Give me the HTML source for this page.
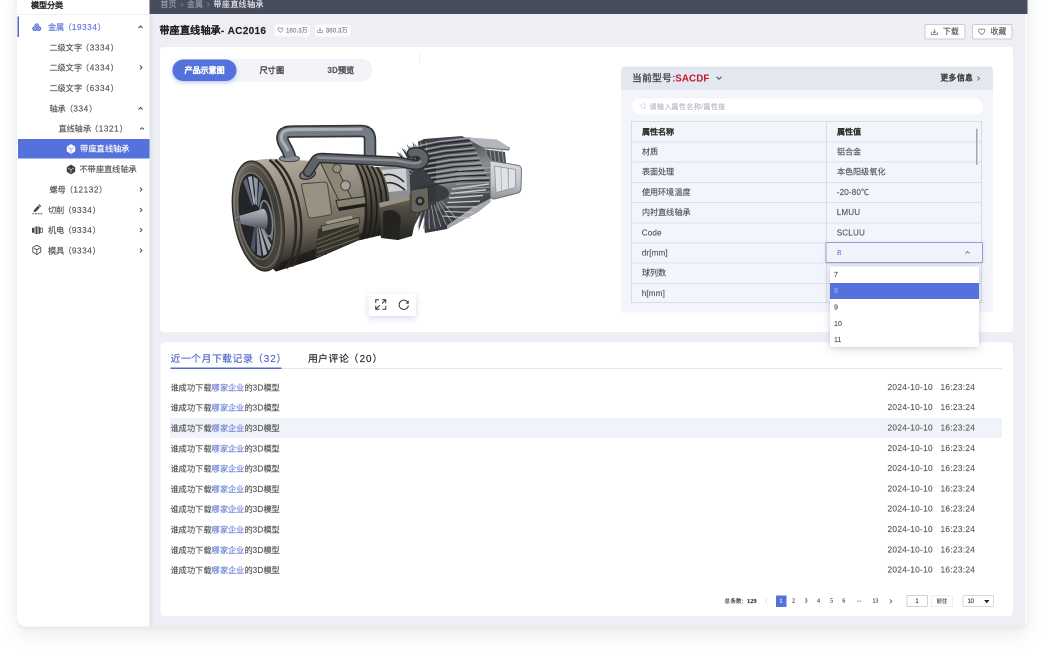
<!DOCTYPE html>
<html lang="zh-CN">
<head>
<meta charset="utf-8">
<title>带座直线轴承 - AC2016</title>
<style>
html,body{margin:0;padding:0;width:1045px;height:653px;overflow:hidden;background:#fff;}
body{font-family:"Liberation Sans",sans-serif;}
/* everything below is authored at 2x and scaled down by 0.5 */
#stage{-webkit-text-stroke:0.28px;will-change:transform;position:absolute;left:0;top:0;width:2090px;height:1306px;transform:scale(0.5);transform-origin:0 0;overflow:hidden;background:#fff;font-size:16.2px;color:#555;}
#stage *{box-sizing:border-box;}
.abs{position:absolute;}
.t{position:absolute;white-space:nowrap;height:40px;line-height:40px;}
#card{position:absolute;left:34px;top:-40px;width:2021px;height:1293px;border-radius:0 0 18px 18px;background:#eeeff5;box-shadow:0 16px 40px rgba(60,65,90,0.10),0 4px 10px rgba(60,65,90,0.06);overflow:hidden;}
#side{position:absolute;left:0;top:0;width:265px;height:1293px;background:#fff;box-shadow:3px 0 9px rgba(40,45,70,0.09);}
#topbar{position:absolute;left:265px;top:40px;width:1756px;height:28px;background:#464c5c;}
/* sidebar */
.row{position:absolute;left:0;width:265px;height:40.6px;line-height:40.6px;white-space:nowrap;color:#555;font-size:16.4px;letter-spacing:0.35px;}
.n{font-style:normal;letter-spacing:1.15px;margin-left:-1.6px;}
.row span{position:absolute;top:0;}
.row svg{position:absolute;}
.chev{position:absolute;width:12px;height:12px;}
.hl{left:0;width:100%;height:2px;background:#dde0ea;}
.c1{left:19.5px;font-size:16.200px;color:#555;letter-spacing:0.300px;}
.c2{left:409.5px;font-size:16.200px;color:#555;letter-spacing:0.300px;}
.dd{left:1668px;font-size:14.200px;color:#505050;}
.r1{left:341px;font-size:16.400px;color:#555;letter-spacing:0.420px;}
.lk{color:#6a7fd6;}
.r2{left:1775px;font-size:16.600px;color:#5c5c5c;letter-spacing:0.600px;}
.r3{left:1881px;font-size:16.600px;color:#5c5c5c;letter-spacing:0.600px;}
.pg{font-size:10.800px;color:#333;}
.pn{font-size:11.600px;color:#333;text-align:center;font-family:"Liberation Serif",serif;}
.sep{display:inline-block;width:20.5px;text-align:center;color:#7d8291;font-size:14px;transform:scaleX(0.8);}
.n2{font-style:normal;letter-spacing:1.9px;margin-left:-1px;}
</style>
</head>
<body>
<div id="stage">
<div id="card">
  <div id="side"></div>
  <div id="topbar"></div>
  <div class="abs" style="left:2016px;top:68px;width:5px;height:1225px;background:#f6f7fa;border-left:1.5px solid #fdfdfe;"></div>
</div>

<!-- ===== SIDEBAR ===== -->
<div id="sidebar" class="abs" style="left:34px;top:0;width:265px;height:1253px;">
  <div class="t" style="left:28px;top:-10.5px;font-weight:bold;color:#333;font-size:16.2px;">模型分类</div>
  <div class="abs" style="left:0;top:28px;width:265px;height:2px;background:#f0f1f4;"></div>
  <div class="abs" style="left:1px;top:33px;width:3px;height:41px;background:#5468c4;"></div>

  <div class="row" style="top:34.1px;color:#5b74d8;">
    <svg style="left:29px;top:10px" width="21" height="21" viewBox="0 0 21 21"><path d="M10.5 1.2c2.6 0 4.6 1.9 4.6 4.3 0 .5-.1 1-.2 1.4 2.600.3 4.6 2.300 4.6 4.800 0 2.700-2.300 4.800-5.200 4.800-1.400 0-2.700-.5-3.600-1.400-.9.9-2.200 1.400-3.600 1.400C4.200 16.500 1.500 14.400 1.500 11.700c0-2.500 2-4.500 4.600-4.800-.1-.4-.2-.9-.2-1.400 0-2.400 2-4.300 4.600-4.300z" transform="translate(0,1.500)" fill="#5b74d8"/><circle cx="10.500" cy="7.200" r="1.900" fill="none" stroke="#fff" stroke-width="0.900"/><circle cx="6.800" cy="13" r="1.900" fill="none" stroke="#fff" stroke-width="0.900"/><circle cx="14.200" cy="13" r="1.900" fill="none" stroke="#fff" stroke-width="0.900"/></svg>
    <span style="left:61.5px;">金属<i class="n">（19334）</i></span>
    <svg class="chev" style="left:241px;top:14px" viewBox="0 0 12 12"><path d="M2 8 L6 4 L10 8" fill="none" stroke="#4a4a4a" stroke-width="2"/></svg>
  </div>
  <div class="row" style="top:74.7px;"><span style="left:64.500px;">二级文字<i class="n">（3334）</i></span></div>
  <div class="row" style="top:115.3px;"><span style="left:64.500px;">二级文字<i class="n">（4334）</i></span>
    <svg class="chev" style="left:242px;top:14px" viewBox="0 0 12 12"><path d="M4 2 L8 6 L4 10" fill="none" stroke="#4a4a4a" stroke-width="2"/></svg></div>
  <div class="row" style="top:155.9px;"><span style="left:64.500px;">二级文字<i class="n">（6334）</i></span></div>
  <div class="row" style="top:196.5px;"><span style="left:64.500px;">轴承<i class="n">（334）</i></span>
    <svg class="chev" style="left:241px;top:14px" viewBox="0 0 12 12"><path d="M2 8 L6 4 L10 8" fill="none" stroke="#4a4a4a" stroke-width="2"/></svg></div>
  <div class="row" style="top:237.1px;"><span style="left:82.500px;">直线轴承<i class="n">（1321）</i></span>
    <svg class="chev" style="left:244px;top:14px" viewBox="0 0 12 12"><path d="M2 8 L6 4 L10 8" fill="none" stroke="#4a4a4a" stroke-width="2"/></svg></div>
  <div class="row" style="top:278.2px;height:38.900px;line-height:38.900px;background:#5571db;color:#fff;left:2.4px;width:262.6px;">
    <svg style="left:95.400px;top:9.500px" width="20" height="20" viewBox="0 0 20 20"><path d="M10 1.300 L17.600 5.600 L17.600 14.400 L10 18.700 L2.400 14.400 L2.400 5.600 Z" fill="#fff" stroke="#fff" stroke-width="1.600" stroke-linejoin="round"/><path d="M4.600 7 L10 10.200 L15.400 7 M10 10.200 L10 16.300" fill="none" stroke="#6c84e0" stroke-width="1.300" stroke-linecap="round"/></svg>
    <span style="left:124.100px;">带座直线轴承</span>
  </div>
  <div class="row" style="top:318.3px;">
    <svg style="left:98px;top:10.300px" width="20" height="20" viewBox="0 0 20 20"><path d="M10 1.300 L17.600 5.600 L17.600 14.400 L10 18.700 L2.400 14.400 L2.400 5.600 Z" fill="#3d4047" stroke="#3d4047" stroke-width="1.600" stroke-linejoin="round"/><path d="M4.600 7 L10 10.200 L15.400 7 M10 10.200 L10 16.300" fill="none" stroke="#e8e9ec" stroke-width="1.200" stroke-linecap="round"/></svg>
    <span style="left:125px;">不带座直线轴承</span>
  </div>
  <div class="row" style="top:358.9px;"><span style="left:64.500px;">螺母<i class="n">（12132）</i></span>
    <svg class="chev" style="left:242px;top:14px" viewBox="0 0 12 12"><path d="M4 2 L8 6 L4 10" fill="none" stroke="#4a4a4a" stroke-width="2"/></svg></div>
  <div class="row" style="top:399.5px;">
    <svg style="left:30px;top:5.500px" width="22" height="24" viewBox="0 0 22 24"><path d="M4 15 L14.500 3.500 L18.500 7 L8 18.200 L3.200 19.400 Z" fill="#444"/><path d="M12.300 6 L16.300 9.500" stroke="#fff" stroke-width="1.200"/><path d="M1 22.500 H21" stroke="#444" stroke-width="1.800" stroke-dasharray="3.500 1.800"/></svg>
    <span style="left:61.500px;">切削<i class="n">（9334）</i></span>
    <svg class="chev" style="left:242px;top:14px" viewBox="0 0 12 12"><path d="M4 2 L8 6 L4 10" fill="none" stroke="#4a4a4a" stroke-width="2"/></svg></div>
  <div class="row" style="top:440.1px;">
    <svg style="left:29px;top:11px" width="23" height="19" viewBox="0 0 23 19"><rect x="1" y="4.500" width="4" height="10" rx="1" fill="#444"/><rect x="6" y="2" width="11" height="15" rx="2.500" fill="#444"/><path d="M8.500 2.500 V16.500 M11.500 2.500 V16.500 M14.500 2.500 V16.500" stroke="#fff" stroke-width="1"/><rect x="17.500" y="5" width="4.500" height="9" rx="1.500" fill="none" stroke="#444" stroke-width="1.500"/></svg>
    <span style="left:61.500px;">机电<i class="n">（9334）</i></span>
    <svg class="chev" style="left:242px;top:14px" viewBox="0 0 12 12"><path d="M4 2 L8 6 L4 10" fill="none" stroke="#4a4a4a" stroke-width="2"/></svg></div>
  <div class="row" style="top:480.7px;">
    <svg style="left:29.300px;top:8.500px" width="21" height="21" viewBox="0 0 21 21"><path d="M10.500 1.500 L18.500 6 L18.500 15 L10.500 19.500 L2.500 15 L2.500 6 Z" fill="none" stroke="#444" stroke-width="1.700" stroke-linejoin="round"/><path d="M5.500 7.800 L10.500 10.500 L15.500 7.800 M10.500 10.500 L10.500 16" fill="none" stroke="#444" stroke-width="1.700" stroke-linecap="round"/></svg>
    <span style="left:61.500px;">模具<i class="n">（9334）</i></span>
    <svg class="chev" style="left:242px;top:14px" viewBox="0 0 12 12"><path d="M4 2 L8 6 L4 10" fill="none" stroke="#4a4a4a" stroke-width="2"/></svg></div>
</div>

<!-- ===== TOP BAR / TITLE ===== -->
<div id="head" class="abs" style="left:0;top:0;width:2090px;height:94px;">
  <div class="t" style="left:321px;top:-11.300px;font-size:15.800px;color:#9a9fad;letter-spacing:0.300px;">首页<span class="sep">&gt;</span>金属<span class="sep">&gt;</span><span style="color:#e4e6eb;letter-spacing:0.700px;">带座直线轴承</span></div>
  <div class="t" style="left:318.500px;top:41.300px;font-size:20.200px;font-weight:bold;color:#222;letter-spacing:0.550px;">带座直线轴承- AC2016</div>
</div>

<!-- ===== BADGES + BUTTONS ===== -->
<div class="abs" style="left:549px;top:48.500px;width:71px;height:24.500px;background:#fbfbfd;border-radius:5px;"></div>
<svg class="abs" style="left:554.500px;top:54px" width="12" height="12" viewBox="0 0 12 12"><path d="M6 10.600 C3.500 8.600 1 6.600 1 4.200 C1 2.700 2.100 1.600 3.500 1.600 C4.500 1.600 5.400 2.100 6 3 C6.600 2.100 7.500 1.600 8.500 1.600 C9.900 1.600 11 2.700 11 4.200 C11 6.600 8.500 8.600 6 10.600 Z" fill="none" stroke="#777" stroke-width="1.200"/></svg>
<div class="t" style="left:572px;top:40.500px;font-size:12.200px;color:#7a7d85;letter-spacing:0.200px;">160.3万</div>
<div class="abs" style="left:629.500px;top:48.500px;width:71px;height:24.500px;background:#fbfbfd;border-radius:5px;"></div>
<svg class="abs" style="left:634px;top:54px" width="12" height="12" viewBox="0 0 12 12"><path d="M1.200 6.500 V10.800 H10.800 V6.500 M6 1 V8 M3.500 5.600 L6 8.200 L8.500 5.600" fill="none" stroke="#777" stroke-width="1.200"/></svg>
<div class="t" style="left:651.500px;top:40.500px;font-size:12.200px;color:#7a7d85;letter-spacing:0.200px;">360.3万</div>

<div class="abs" style="left:1848.500px;top:47.500px;width:82px;height:31.500px;background:#fdfdfe;border:2px solid #c9ccd3;border-radius:4px;"></div>
<svg class="abs" style="left:1861px;top:55.500px" width="15" height="15" viewBox="0 0 15 15"><path d="M1.500 8 V13.300 H13.500 V8 M7.500 1.500 V10 M4.300 7 L7.500 10.300 L10.700 7" fill="none" stroke="#666" stroke-width="1.400"/></svg>
<div class="t" style="left:1885.500px;top:43px;font-size:15.600px;color:#555;">下载</div>
<div class="abs" style="left:1944px;top:47.500px;width:81px;height:31.500px;background:#fdfdfe;border:2px solid #c9ccd3;border-radius:4px;"></div>
<svg class="abs" style="left:1955.500px;top:55.500px" width="15" height="15" viewBox="0 0 15 15"><path d="M7.500 13.200 C4.300 10.700 1.200 8.200 1.200 5.200 C1.200 3.300 2.600 1.900 4.400 1.900 C5.700 1.900 6.800 2.600 7.500 3.700 C8.200 2.600 9.300 1.900 10.600 1.900 C12.400 1.900 13.800 3.300 13.800 5.200 C13.800 8.200 10.700 10.700 7.500 13.200 Z" fill="none" stroke="#666" stroke-width="1.400"/></svg>
<div class="t" style="left:1980.500px;top:43px;font-size:15.600px;color:#555;">收藏</div>

<!-- ===== PANEL 1 ===== -->
<div id="p1" class="abs" style="left:320px;top:94px;width:1706px;height:569.500px;background:#fff;border-radius:7px;"></div>
<div class="abs" style="left:838px;top:102px;width:1.500px;height:25px;background:#f0f1f5;"></div>
<!-- tabs -->
<div class="abs" style="left:345px;top:118.500px;width:399px;height:43px;border-radius:22px;background:#f2f4fa;box-shadow:0 0 0 1px #eceef6;"></div>
<div class="abs" style="left:345px;top:118.500px;width:128px;height:43px;border-radius:22px;background:#5571db;box-shadow:0 4px 8px rgba(85,113,219,0.35);"></div>
<div class="t" style="left:345px;width:128px;text-align:center;top:120px;font-size:16.300px;font-weight:bold;color:#fff;letter-spacing:0.200px;">产品示意图</div>
<div class="t" style="left:483px;width:121px;text-align:center;top:120px;font-size:16.300px;font-weight:bold;color:#555;letter-spacing:0.200px;">尺寸图</div>
<div class="t" style="left:621px;width:121px;text-align:center;top:120px;font-size:16.300px;font-weight:bold;color:#555;letter-spacing:0.200px;">3D预览</div>

<!--ENGINE_START--><svg class="abs" style="left:450px;top:236px" width="620" height="330" viewBox="225 118 310 165">
<defs>
<linearGradient id="gBody" x1="0" y1="0" x2="0.25" y2="1"><stop offset="0" stop-color="#b6b0a3"/><stop offset="0.18" stop-color="#a49d90"/><stop offset="0.45" stop-color="#8c8478"/><stop offset="0.68" stop-color="#6c665c"/><stop offset="0.85" stop-color="#433f39"/><stop offset="1" stop-color="#1d1b19"/></linearGradient>
<linearGradient id="gRing" x1="0" y1="0" x2="1" y2="1"><stop offset="0" stop-color="#8a8577"/><stop offset="0.30" stop-color="#5a564d"/><stop offset="0.65" stop-color="#3c3a34"/><stop offset="1" stop-color="#57534a"/></linearGradient>
<linearGradient id="gTube" x1="0" y1="0" x2="0" y2="1"><stop offset="0" stop-color="#a3a7ae"/><stop offset="0.45" stop-color="#6d7178"/><stop offset="1" stop-color="#2d2f34"/></linearGradient>
<linearGradient id="gTube2" x1="0" y1="0" x2="0" y2="1"><stop offset="0" stop-color="#55585f"/><stop offset="0.4" stop-color="#8a8e96"/><stop offset="1" stop-color="#2b2d31"/></linearGradient>
<linearGradient id="gCone" x1="0" y1="0" x2="0" y2="1"><stop offset="0" stop-color="#b4b8c0"/><stop offset="0.5" stop-color="#868b95"/><stop offset="1" stop-color="#4a4e56"/></linearGradient>
<linearGradient id="gFin" x1="0" y1="0" x2="0.3" y2="1"><stop offset="0" stop-color="#33363a"/><stop offset="0.30" stop-color="#54585d"/><stop offset="0.52" stop-color="#8a8e93"/><stop offset="0.72" stop-color="#55595e"/><stop offset="1" stop-color="#303337"/></linearGradient>
<linearGradient id="gTail" x1="0" y1="0" x2="0" y2="1"><stop offset="0" stop-color="#d9dbde"/><stop offset="0.6" stop-color="#c1c4c8"/><stop offset="1" stop-color="#8e9297"/></linearGradient>
<linearGradient id="gRings" x1="0" y1="0" x2="0" y2="1"><stop offset="0" stop-color="#787365"/><stop offset="0.5" stop-color="#48453c"/><stop offset="1" stop-color="#1d1b18"/></linearGradient>
<linearGradient id="gClamp" x1="0" y1="0" x2="0" y2="1"><stop offset="0" stop-color="#7c786b"/><stop offset="0.4" stop-color="#4f4c43"/><stop offset="1" stop-color="#252420"/></linearGradient>
</defs>
<path d="M483 149 L505 152 L506 163 L486 162 Z" fill="#4b4e53"/>
<path d="M486 150 L487.5 162" stroke="#9a9ea3" stroke-width="1"/>
<path d="M490 150 L491.5 162" stroke="#9a9ea3" stroke-width="1"/>
<path d="M494 150 L495.5 162" stroke="#9a9ea3" stroke-width="1"/>
<path d="M498 150 L499.5 162" stroke="#9a9ea3" stroke-width="1"/>
<path d="M502 150 L503.5 162" stroke="#9a9ea3" stroke-width="1"/>
<path d="M489 160.500 L519 165.500 Q521.500 167 521.500 170 L521 189 Q520.500 192 518 193 L494.500 199 Q490.500 199 490 196 Z" fill="url(#gTail)" stroke="#6f7378" stroke-width="1"/>
<path d="M494.500 166 L515.500 169.500 L515.500 187.500 L496 192.500 Z" fill="#dfe1e4" stroke="#8f9398" stroke-width="0.800"/>
<path d="M501 167.500 L501.500 190.500 M508 168.500 L508.500 189" stroke="#a8acb0" stroke-width="0.800"/>
<path d="M464 137 L497 139.500 L509.500 147.500 L508.500 150 L480 147.500 Z" fill="#b3b7bb"/>
<path d="M480 147.500 L508.500 150 L509.500 147.500" fill="none" stroke="#6c7075" stroke-width="1.200"/>
<path d="M418 142 L424 139 L462 136 L484 148 L490.500 160 L490.500 202 L478 212 L447 229 L425 233 Z" fill="url(#gFin)"/>
<path d="M449.9 206.3 L459.7 219.8 L446.9 209.2 L454.8 223.9 L443.6 211.6 L449.4 227.2 L440 213.5 L443.6 229.8 L436.1 214.9 L437.5 231.5 L432.1 215.7 L431.2 232.4 L428 216 L424.8 232.4 L423.9 215.7 L418.5 231.5 L419.9 214.9 L412.4 229.8 L416 213.5 L406.6 227.2 L412.4 211.6 L401.2 223.9 L409.1 209.2 L396.3 219.8 L406.1 206.3 L391.9 215.2 L403.5 203.1 L388.3 209.9 L401.4 199.5 L385.3 204.2 L399.7 195.7 L383.2 198.2 L398.6 191.7 L381.9 191.9 L398.1 187.6 L381.5 185.5 L398.1 183.4 L381.9 179.1 L398.6 179.3 L383.2 172.8 L399.7 175.3 L385.3 166.8 L401.4 171.5 L388.3 161.1 L403.5 167.9 L391.9 155.8 L406.1 164.7 L396.3 151.2 L409.1 161.8 L401.2 147.1 L412.4 159.4 L406.6 143.8 L416 157.5 L412.4 141.2 L419.9 156.1 L418.5 139.5 L423.9 155.3 L424.8 138.6 L428 155 L436 159.5 L436 211.5 Z" fill="#3a3d42"/>
<path d="M441.1 200.6 L456.2 218.3" stroke="#9a9ea4" stroke-width="0.850"/>
<path d="M439 202.2 L451.6 221.9" stroke="#9a9ea4" stroke-width="0.850"/>
<path d="M436.6 203.6 L446.4 224.8" stroke="#9a9ea4" stroke-width="0.850"/>
<path d="M434 204.6 L441 227" stroke="#9a9ea4" stroke-width="0.850"/>
<path d="M431.4 205.2 L435.3 228.4" stroke="#9a9ea4" stroke-width="0.850"/>
<path d="M428.7 205.5 L429.4 229" stroke="#9a9ea4" stroke-width="0.850"/>
<path d="M425.9 205.4 L423.6 228.8" stroke="#9a9ea4" stroke-width="0.850"/>
<path d="M423.2 204.9 L417.8 227.8" stroke="#9a9ea4" stroke-width="0.850"/>
<path d="M420.6 204.1 L412.2 226" stroke="#9a9ea4" stroke-width="0.850"/>
<path d="M418.2 202.9 L406.9 223.4" stroke="#9a9ea4" stroke-width="0.850"/>
<path d="M415.9 201.4 L402 220.1" stroke="#9a9ea4" stroke-width="0.850"/>
<path d="M413.8 199.6 L397.6 216.2" stroke="#9a9ea4" stroke-width="0.850"/>
<path d="M412.1 197.6 L393.7 211.8" stroke="#9a9ea4" stroke-width="0.850"/>
<path d="M410.6 195.3 L390.5 206.8" stroke="#9a9ea4" stroke-width="0.850"/>
<path d="M409.4 192.8 L388 201.4" stroke="#9a9ea4" stroke-width="0.850"/>
<path d="M408.6 190.2 L386.2 195.8" stroke="#9a9ea4" stroke-width="0.850"/>
<path d="M408.1 187.5 L385.2 189.9" stroke="#9a9ea4" stroke-width="0.850"/>
<path d="M408 184.8 L385 184" stroke="#9a9ea4" stroke-width="0.850"/>
<path d="M408.3 182.1 L385.6 178.1" stroke="#9a9ea4" stroke-width="0.850"/>
<path d="M408.9 179.4 L387 172.3" stroke="#9a9ea4" stroke-width="0.850"/>
<path d="M409.9 176.9 L389.2 166.8" stroke="#9a9ea4" stroke-width="0.850"/>
<path d="M411.3 174.5 L392.1 161.6" stroke="#9a9ea4" stroke-width="0.850"/>
<path d="M412.9 172.3 L395.6 156.9" stroke="#9a9ea4" stroke-width="0.850"/>
<path d="M414.9 170.4 L399.8 152.7" stroke="#9a9ea4" stroke-width="0.850"/>
<path d="M417 168.8 L404.4 149.1" stroke="#9a9ea4" stroke-width="0.850"/>
<path d="M419.4 167.4 L409.6 146.2" stroke="#9a9ea4" stroke-width="0.850"/>
<path d="M422 166.4 L415 144" stroke="#9a9ea4" stroke-width="0.850"/>
<path d="M424.6 165.8 L420.7 142.6" stroke="#9a9ea4" stroke-width="0.850"/>
<path d="M427.3 165.5 L426.6 142" stroke="#9a9ea4" stroke-width="0.850"/>
<path d="M408 148 L439 141.5 L470 138" fill="none" stroke="#9da1a6" stroke-width="1.400"/>
<path d="M409 150.2 L440 143.7 L470 140.2" fill="none" stroke="#25272a" stroke-width="1.400"/>
<path d="M411.2 152.2 L441.8 146.1 L472.4 143" fill="none" stroke="#9da1a6" stroke-width="1.400"/>
<path d="M412.2 154.4 L442.8 148.3 L472.4 145.2" fill="none" stroke="#25272a" stroke-width="1.400"/>
<path d="M414.5 156.5 L444.6 150.8 L474.8 148" fill="none" stroke="#9da1a6" stroke-width="1.400"/>
<path d="M415.5 158.7 L445.6 152.9 L474.8 150.2" fill="none" stroke="#25272a" stroke-width="1.400"/>
<path d="M417.8 160.8 L447.4 155.4 L477.1 153" fill="none" stroke="#9da1a6" stroke-width="1.400"/>
<path d="M418.8 162.9 L448.4 157.6 L477.1 155.2" fill="none" stroke="#25272a" stroke-width="1.400"/>
<path d="M421 165 L450.2 160 L479.5 158" fill="none" stroke="#9da1a6" stroke-width="1.400"/>
<path d="M422 167.2 L451.2 162.2 L479.5 160.2" fill="none" stroke="#25272a" stroke-width="1.400"/>
<path d="M424.2 169.2 L453.1 164.6 L481.9 163" fill="none" stroke="#9da1a6" stroke-width="1.400"/>
<path d="M425.2 171.4 L454.1 166.8 L481.9 165.2" fill="none" stroke="#25272a" stroke-width="1.400"/>
<path d="M427.5 173.5 L455.9 169.2 L484.2 168" fill="none" stroke="#9da1a6" stroke-width="1.400"/>
<path d="M428.5 175.7 L456.9 171.4 L484.2 170.2" fill="none" stroke="#25272a" stroke-width="1.400"/>
<path d="M430.8 177.8 L458.7 173.9 L486.6 173" fill="none" stroke="#9da1a6" stroke-width="1.400"/>
<path d="M431.8 179.9 L459.7 176.1 L486.6 175.2" fill="none" stroke="#25272a" stroke-width="1.400"/>
<path d="M434 182 L461.5 178.5 L489 178" fill="none" stroke="#9da1a6" stroke-width="1.400"/>
<path d="M435 184.2 L462.5 180.7 L489 180.2" fill="none" stroke="#25272a" stroke-width="1.400"/>
<path d="M452 189 L489 184" stroke="#c9ccd0" stroke-width="1.6"/>
<path d="M450.5 193.5 L486 189.7" stroke="#c9ccd0" stroke-width="1.5"/>
<path d="M449 198 L483 195.4" stroke="#c9ccd0" stroke-width="1.4"/>
<path d="M447.5 202.5 L480 201.1" stroke="#c9ccd0" stroke-width="1.3"/>
<path d="M446 207 L477 206.8" stroke="#c9ccd0" stroke-width="1.2"/>
<path d="M444.5 211.5 L474 212.5" stroke="#c9ccd0" stroke-width="1.1"/>
<path d="M443 216 L471 218.2" stroke="#c9ccd0" stroke-width="1"/>
<path d="M447 229 L478 212 L490.500 202 L490.500 198.500 L472 208 L447 225.500 Z" fill="#bfc2c6" opacity="0.800"/>
<path d="M458 170.5 L490 167.5" stroke="#a9adb2" stroke-width="1.100" opacity="0.850"/>
<path d="M457.2 175.1 L490 172.4" stroke="#a9adb2" stroke-width="1.100" opacity="0.850"/>
<path d="M456.4 179.7 L490 177.3" stroke="#a9adb2" stroke-width="1.100" opacity="0.850"/>
<path d="M455.6 184.3 L490 182.2" stroke="#a9adb2" stroke-width="1.100" opacity="0.850"/>
<path d="M454.8 188.9 L490 187.1" stroke="#a9adb2" stroke-width="1.100" opacity="0.850"/>
<path d="M454 193.5 L490 192" stroke="#a9adb2" stroke-width="1.100" opacity="0.850"/>
<ellipse cx="432" cy="193" rx="17" ry="9" fill="#34373b" opacity="0.900"/>
<path d="M376 167 L409 165 L412 222 L380 236 Z" fill="#8d9196"/>
<path d="M379 170 L406 168.500 L407 190 L381 193 Z" fill="#d4d6d9" opacity="0.900"/>
<path d="M382 176 C390 172 398 176 404 182 M384 184 C392 180 400 186 405 190" fill="none" stroke="#26282b" stroke-width="1.600"/>
<path d="M378 205 L410 198 L411 222 L380 236 Z" fill="#2e2f31"/>
<path d="M250 161.500 C262 158.500 274 158.500 281 159 L320 161.500 L354 163.500 L379 167.500 C391 182 393 218 385.500 234 L358 240.500 L314 259.500 L276 271.500 C262 262 246 200 250 161.500 Z" fill="url(#gBody)"/>
<path d="M276 271.500 L314 259.500 L358 240.500 L385.500 234 L386 229 L356 234 L312 250 L281 262 Z" fill="#1c1a17" opacity="0.750"/>
<path d="M354 163.500 L379 167.500 C391 182 393 218 385.500 234 L360 240 C367 222 366 184 354 163.500 Z" fill="url(#gRings)"/>
<path d="M356 164 C368 184 369 220 362 239.5" fill="none" stroke="#1e1c19" stroke-width="1.700"/>
<path d="M361.2 164.8 C373.2 184 374.2 220 367.2 238.3" fill="none" stroke="#1e1c19" stroke-width="1.700"/>
<path d="M366.4 165.6 C378.4 184 379.4 220 372.4 237.1" fill="none" stroke="#1e1c19" stroke-width="1.700"/>
<path d="M371.6 166.3 C383.6 184 384.6 220 377.6 235.9" fill="none" stroke="#1e1c19" stroke-width="1.700"/>
<path d="M376.8 167.1 C388.8 184 389.8 220 382.8 234.7" fill="none" stroke="#1e1c19" stroke-width="1.700"/>
<path d="M269.5 160 C293.5 178 305.5 238 286.5 268.2" fill="none" stroke="#2b2823" stroke-width="2.6"/>
<path d="M275 160 C299 178 311 238 292 266.6" fill="none" stroke="#2b2823" stroke-width="2.4"/>
<path d="M301.500 186 Q301 184 303 183.700 L324 182 Q326.500 182 327.500 184.500 L331.500 212 Q331.800 214.500 329.500 215 L311.500 218 Q309 218.300 308.200 216 Z" fill="#999282" stroke="#4e4940" stroke-width="1.100"/>
<path d="M320 161.500 L334 162.500 L352 199 L340 203 Z" fill="#8d8675" stroke="#3e3a32" stroke-width="1"/>
<circle cx="337" cy="168.500" r="4.300" fill="#8e8e88" stroke="#3a362f" stroke-width="0.900"/>
<circle cx="345.500" cy="185.500" r="4.800" fill="#a3a39c" stroke="#3a362f" stroke-width="0.900"/>
<path d="M336 200.500 L365 196.500 L366 203.500 L338 208 Z" fill="#888272" stroke="#2d2a25" stroke-width="1"/>
<path d="M338 208 L366 203.500 L366 206.500 L339 211 Z" fill="#1e1c19"/>
<path d="M318 229 L359 219.500 L359 239.500 L315 258 Z" fill="#35322b"/>
<path d="M321 226 L359 217.500 L359.500 223 L322 232 Z" fill="#837e6e" stroke="#2a2823" stroke-width="0.800"/>
<path d="M326 221.500 L352 215.500 L352.500 218.500 L327 224.500 Z" fill="#9f9989"/>
<clipPath id="cBox"><path d="M318 229 L359 219.500 L359 239.500 L315 258 Z"/></clipPath><g clip-path="url(#cBox)">
<path d="M317 240 L359 223.5" stroke="#6a6555" stroke-width="1"/>
<path d="M317 244.2 L359 228.3" stroke="#6a6555" stroke-width="1"/>
<path d="M317 248.4 L359 233.1" stroke="#6a6555" stroke-width="1"/>
<path d="M317 252.6 L359 237.9" stroke="#6a6555" stroke-width="1"/>
<path d="M317 256.8 L359 242.7" stroke="#6a6555" stroke-width="1"/>
</g>
<path d="M379 203 L409 196 L411 190 L428 187.500 L429 209 L417 213 L412 236 L398 240 L381 238 Z" fill="url(#gClamp)"/>
<path d="M411 190 L428 187.500 L429 209 L417 213 L411 211 Z" fill="#68655a" stroke="#2c2a25" stroke-width="0.800"/>
<circle cx="420" cy="201" r="4.600" fill="#2a2b2d"/><circle cx="420" cy="201" r="2.200" fill="#74777b"/>
<path d="M383 212 C390 208 398 210 401 218 L399 240 L383 238 Z" fill="#24231f"/>
<path d="M379 203 L409 196 L409.500 200 L380 207.500 Z" fill="#989384"/>
<g transform="rotate(-9 258.300 216)">
<ellipse cx="258.300" cy="216" rx="24.800" ry="55.500" fill="url(#gRing)"/>
<ellipse cx="258.300" cy="216" rx="24.800" ry="55.500" fill="none" stroke="#2f2d28" stroke-width="1.300"/>
<ellipse cx="257.800" cy="216" rx="22.300" ry="52" fill="none" stroke="#9a9588" stroke-width="1.100" opacity="0.550"/>
<ellipse cx="256.300" cy="215.800" rx="17.500" ry="43.500" fill="#232427"/>
<ellipse cx="256.300" cy="215.800" rx="17.500" ry="43.500" fill="none" stroke="#8c877a" stroke-width="1.500" opacity="0.650"/>
<path d="M254 205.2 L248.8 180 L252.7 176.3 L255.2 204.1 Z" fill="#5e6574"/>
<path d="M255.6 203.9 L254.1 175.7 L258.2 175.6 L256.9 203.9 Z" fill="#a2a8b4"/>
<path d="M257.3 204.1 L259.6 176.2 L263.6 179.7 L258.6 205.1 Z" fill="#8d94a3"/>
<path d="M258.9 205.6 L264.8 181.5 L268 188.2 L260 207.6 Z" fill="#6d7483"/>
<path d="M260.7 221.4 L270.4 234.8 L268 243.4 L260 224 Z" fill="#6f7686"/>
<path d="M259.5 225 L266.6 246.8 L263.1 252.5 L258.4 226.7 Z" fill="#989eab"/>
<path d="M257.8 227.2 L261.2 254.3 L257.1 256.2 L256.6 227.8 Z" fill="#a0a6b3"/>
<path d="M256 227.8 L255.2 256.2 L251.1 254.1 L254.7 227.1 Z" fill="#7b8291"/>
<path d="M254.1 226.6 L249.3 252.2 L245.8 246.4 L253 224.9 Z" fill="#4f5563"/>
</g>
<ellipse cx="266.500" cy="218.500" rx="5.600" ry="18" transform="rotate(-9 266.500 218.500)" fill="#2b2c30" stroke="#7f838c" stroke-width="1.800"/>
<path d="M235 220.300 C235.500 217.800 237.500 216.600 239.500 215.800 L263.500 208.800 C268.500 211 269 228 265 229.500 L239.500 223.800 C237 223.300 235.200 222.300 235 220.300 Z" fill="url(#gCone)"/>
<path d="M235 220.300 L239.500 215.800 L241 224 Z" fill="#54575e"/>
<ellipse cx="289.500" cy="158.500" rx="10" ry="3.200" fill="#8b8f95" stroke="#3b3d41" stroke-width="0.900"/>
<path d="M290 157 C288 148 281.500 143 282.500 136.500 C283.500 131 289 131.500 297 131.500 L361 131 C368.500 131 370 135 370 141 L370 156" fill="none" stroke="#34363b" stroke-width="12.500" stroke-linejoin="round"/>
<path d="M290 157 C288 148 281.500 143 282.500 136.500 C283.500 131 289 131.500 297 131.500 L361 131 C368.500 131 370 135 370 141 L370 156" fill="none" stroke="#767b84" stroke-width="9" stroke-linejoin="round"/>
<path d="M287.500 150 C285.500 145 280 141 281.500 135.500 C283 129.500 289 129.500 297 129.500 L361 129" fill="none" stroke="#b4b8c0" stroke-width="3.200" stroke-linecap="round" opacity="0.850"/>
<ellipse cx="307.500" cy="174.500" rx="8" ry="4.500" transform="rotate(-15 307.500 174.500)" fill="#75787e" stroke="#2c2e31" stroke-width="1.300"/>
<path d="M308 172 L315.500 160.500 C317 158.500 319 158 322 158 L395 161.500 C410 163 418 168 423 162 C427 156 420 150 412 153" fill="none" stroke="#2c2e32" stroke-width="10.500" stroke-linecap="round" stroke-linejoin="round"/>
<path d="M308 172 L315.500 160.500 C317 158.500 319 158 322 158 L395 161.500 C410 163 418 168 423 162 C427 156 420 150 412 153" fill="none" stroke="#5f6369" stroke-width="7.500" stroke-linecap="round" stroke-linejoin="round"/>
<path d="M318 157.500 L395 160.500 C408 162 416 165.500 420.500 161.500" fill="none" stroke="#8d9199" stroke-width="2.400" stroke-linecap="round" opacity="0.900"/>
</svg><!--ENGINE_END-->

<!-- toolbar -->
<div class="abs" style="left:736.500px;top:587px;width:95.500px;height:45px;background:#fff;border-radius:4px;box-shadow:0 6px 14px rgba(110,120,200,0.22),0 0 6px rgba(110,120,200,0.10);"></div>
<svg class="abs" style="left:750px;top:598px" width="23" height="22" viewBox="0 0 23 22"><g fill="none" stroke="#333" stroke-width="2"><path d="M1.500 8 V1.500 H8 M1.500 1.500"/><path d="M14 1.500 H21.500 V8.500 M21 2 L13.500 9.500"/><path d="M9 20.500 H1.500 V13.500 M2 20 L9.500 12.500"/><path d="M21.500 14 V20.500 H15"/></g></svg>
<svg class="abs" style="left:796px;top:598px" width="23" height="22" viewBox="0 0 23 22"><path d="M20.300 8.300 A9.300 9.300 0 1 0 20.800 13" fill="none" stroke="#333" stroke-width="2"/><path d="M21.500 3 V9.300 H15.200 Z" fill="#333"/></svg>

<!-- ===== INFO PANEL ===== -->
<div class="abs" style="left:1242px;top:133px;width:744px;height:492px;background:#f3f5fb;border-radius:7px;"></div>
<div class="abs" style="left:1242px;top:133px;width:744px;height:47px;background:#e3e7ef;border-radius:7px 7px 0 0;"></div>
<div class="t" style="left:1263.500px;top:136px;font-size:19.600px;color:#3a3a3a;letter-spacing:0.300px;-webkit-text-stroke:0.45px #3a3a3a;">当前型号:<span style="color:#c9152c;font-weight:bold;letter-spacing:0.200px;-webkit-text-stroke:0;">SACDF</span></div>
<svg class="abs" style="left:1431px;top:150px" width="14" height="12" viewBox="0 0 14 12"><path d="M2 3.500 L7 8.500 L12 3.500" fill="none" stroke="#444" stroke-width="1.800"/></svg>
<div class="t" style="left:1881px;top:136px;font-size:15.600px;font-weight:bold;color:#444;letter-spacing:0.300px;">更多信息</div>
<svg class="abs" style="left:1951px;top:150.500px" width="12" height="12" viewBox="0 0 12 12"><path d="M4 2 L8 6 L4 10" fill="none" stroke="#555" stroke-width="1.600"/></svg>
<!-- search -->
<div class="abs" style="left:1263.500px;top:197px;width:702.500px;height:31.500px;border-radius:16px;background:#fff;"></div>
<svg class="abs" style="left:1280px;top:206px" width="14" height="14" viewBox="0 0 14 14"><circle cx="6" cy="6" r="4.300" fill="none" stroke="#c3c6cf" stroke-width="1.300"/><path d="M9.200 9.200 L12.500 12.500" stroke="#c3c6cf" stroke-width="1.300"/></svg>
<div class="t" style="left:1299px;top:193px;font-size:14px;color:#b7bac5;letter-spacing:0.750px;">请输入属性名称/属性值</div>
<!-- table -->
<div id="tbl" class="abs" style="left:1262px;top:241.500px;width:702px;height:364.500px;border:2px solid #d8dce7;background:#f3f5fc;">
  <div class="abs" style="left:388px;top:0;width:2px;height:100%;background:#d8dce7;"></div>
  <div class="abs hl" style="top:39.400px;"></div><div class="abs hl" style="top:79.800px;"></div><div class="abs hl" style="top:120.200px;"></div><div class="abs hl" style="top:160.600px;"></div><div class="abs hl" style="top:201px;"></div><div class="abs hl" style="top:241.400px;"></div><div class="abs hl" style="top:281.800px;"></div><div class="abs hl" style="top:322.200px;"></div>
  <div class="t c1" style="top:-1px;font-weight:bold;color:#333;">属性名称</div><div class="t c2" style="top:-1px;font-weight:bold;color:#333;">属性值</div>
  <div class="t c1" style="top:39.400px;">材质</div><div class="t c2" style="top:39.400px;">铝合金</div>
  <div class="t c1" style="top:79.800px;">表面处理</div><div class="t c2" style="top:79.800px;">本色阳级氧化</div>
  <div class="t c1" style="top:120.200px;">使用环境温度</div><div class="t c2" style="top:120.200px;">-20-80℃</div>
  <div class="t c1" style="top:160.600px;">内衬直线轴承</div><div class="t c2" style="top:160.600px;">LMUU</div>
  <div class="t c1" style="top:201px;">Code</div><div class="t c2" style="top:201px;">SCLUU</div>
  <div class="t c1" style="top:241.400px;">dr[mm]</div>
  <div class="t c1" style="top:281.800px;">球列数</div>
  <div class="t c1" style="top:322.200px;">h[mm]</div>
</div>
<!-- scrollbar thumb -->
<div class="abs" style="left:1951.500px;top:257px;width:3.6px;height:73px;background:#a4a7b0;border-radius:2px;"></div>
<!-- select -->
<div class="abs" style="left:1651px;top:483.500px;width:314.500px;height:42px;border:2px solid #96a1cb;background:#f1f3fb;border-radius:2px;box-shadow:0 2px 6px rgba(110,125,200,0.25);"></div>
<div class="t" style="left:1674px;top:485px;font-size:15.200px;color:#6f82d6;">8</div>
<svg class="abs" style="left:1929px;top:499px" width="12" height="12" viewBox="0 0 12 12"><path d="M2 8 L6 4 L10 8" fill="none" stroke="#666" stroke-width="1.700"/></svg>
<!-- ===== PANEL 2 ===== -->
<div id="p2" class="abs" style="left:320.500px;top:685px;width:1705.500px;height:547px;background:#fff;border-radius:7px;"></div>
<div class="t" style="left:341px;top:696.500px;font-size:19.800px;color:#4f66c9;letter-spacing:0.700px;-webkit-text-stroke:0.300px #4f66c9;">近一个月下载记录<i class="n2">（32）</i></div>
<div class="t" style="left:615.500px;top:696.500px;font-size:19.800px;color:#222;letter-spacing:0.700px;-webkit-text-stroke:0.300px #222;">用户评论<i class="n2">（20）</i></div>
<div class="abs" style="left:341px;top:736px;width:1663px;height:2px;background:#e6e8ee;"></div>
<div class="abs" style="left:341px;top:734.500px;width:222px;height:3px;background:#5468c4;"></div>
<div class="abs" style="left:340px;top:836px;width:1664px;height:39.500px;background:#f1f3fb;"></div>
<div class="t r1" style="top:754.8px;">谁成功下载<span class="lk">哪家企业</span>的3D模型</div><div class="t r2" style="top:754.8px;">2024-10-10</div><div class="t r3" style="top:754.8px;">16:23:24</div>
<div class="t r1" style="top:795.4px;">谁成功下载<span class="lk">哪家企业</span>的3D模型</div><div class="t r2" style="top:795.4px;">2024-10-10</div><div class="t r3" style="top:795.4px;">16:23:24</div>
<div class="t r1" style="top:836.0px;">谁成功下载<span class="lk">哪家企业</span>的3D模型</div><div class="t r2" style="top:836.0px;">2024-10-10</div><div class="t r3" style="top:836.0px;">16:23:24</div>
<div class="t r1" style="top:876.6px;">谁成功下载<span class="lk">哪家企业</span>的3D模型</div><div class="t r2" style="top:876.6px;">2024-10-10</div><div class="t r3" style="top:876.6px;">16:23:24</div>
<div class="t r1" style="top:917.2px;">谁成功下载<span class="lk">哪家企业</span>的3D模型</div><div class="t r2" style="top:917.2px;">2024-10-10</div><div class="t r3" style="top:917.2px;">16:23:24</div>
<div class="t r1" style="top:957.8px;">谁成功下载<span class="lk">哪家企业</span>的3D模型</div><div class="t r2" style="top:957.8px;">2024-10-10</div><div class="t r3" style="top:957.8px;">16:23:24</div>
<div class="t r1" style="top:998.4px;">谁成功下载<span class="lk">哪家企业</span>的3D模型</div><div class="t r2" style="top:998.4px;">2024-10-10</div><div class="t r3" style="top:998.4px;">16:23:24</div>
<div class="t r1" style="top:1039.0px;">谁成功下载<span class="lk">哪家企业</span>的3D模型</div><div class="t r2" style="top:1039.0px;">2024-10-10</div><div class="t r3" style="top:1039.0px;">16:23:24</div>
<div class="t r1" style="top:1079.6px;">谁成功下载<span class="lk">哪家企业</span>的3D模型</div><div class="t r2" style="top:1079.6px;">2024-10-10</div><div class="t r3" style="top:1079.6px;">16:23:24</div>
<div class="t r1" style="top:1120.2px;">谁成功下载<span class="lk">哪家企业</span>的3D模型</div><div class="t r2" style="top:1120.2px;">2024-10-10</div><div class="t r3" style="top:1120.2px;">16:23:24</div>
<!-- pagination -->
<div class="t pg" style="left:1449px;top:1181.800px;letter-spacing:0.500px;">总条数:<span style="font-family:'Liberation Serif',serif;letter-spacing:0.2px;font-size:12.6px;font-weight:bold;margin-left:7px;color:#333;">129</span></div>
<svg class="abs" style="left:1528px;top:1196px" width="10" height="12" viewBox="0 0 10 12"><path d="M7 2 L3 6 L7 10" fill="none" stroke="#d5d7de" stroke-width="1.500"/></svg>
<div class="abs" style="left:1552px;top:1190.500px;width:20.500px;height:23px;background:#5571db;"></div>
<div class="t pn" style="left:1552px;width:20.500px;top:1181.800px;color:#fff;">1</div>
<div class="t pn" style="left:1577px;width:20.500px;top:1181.800px;">2</div>
<div class="t pn" style="left:1602px;width:20.500px;top:1181.800px;">3</div>
<div class="t pn" style="left:1627px;width:20.500px;top:1181.800px;">4</div>
<div class="t pn" style="left:1653px;width:20.500px;top:1181.800px;">5</div>
<div class="t pn" style="left:1677.500px;width:20.500px;top:1181.800px;">6</div>
<div class="t pn" style="left:1708px;width:20.500px;top:1179.800px;">...</div>
<div class="t pn" style="left:1740.500px;width:20.500px;top:1181.800px;">13</div>
<svg class="abs" style="left:1776px;top:1195.500px" width="10" height="13" viewBox="0 0 10 13"><path d="M3 2 L7.500 6.500 L3 11" fill="none" stroke="#555" stroke-width="1.700"/></svg>
<div class="abs" style="left:1812.500px;top:1190px;width:43px;height:23.500px;border:2px solid #cfd1d8;background:#fff;border-radius:2px;"></div>
<div class="t" style="left:1812.500px;width:43px;text-align:center;top:1181.800px;font-size:12px;color:#333;">1</div>
<div class="abs" style="left:1862px;top:1190px;width:43.500px;height:23.500px;border:2px solid #eceef2;background:#fff;border-radius:2px;"></div>
<div class="t" style="left:1862px;width:43.500px;text-align:center;top:1181.800px;font-size:10.800px;color:#555;">前往</div>
<div class="abs" style="left:1924.500px;top:1190px;width:63px;height:23.500px;border:2px solid #d6d8de;background:#fff;border-radius:2px;"></div>
<div class="t" style="left:1935px;top:1181.800px;font-size:12px;color:#333;letter-spacing:-0.300px;">10</div>
<svg class="abs" style="left:1967px;top:1198.500px" width="13" height="8" viewBox="0 0 13 8"><path d="M1 1 H12 L6.500 7.500 Z" fill="#222"/></svg>

<!-- dropdown -->
<div class="abs" style="left:1659.500px;top:533px;width:298.500px;height:161px;background:#fff;border-radius:3px;box-shadow:0 4px 16px rgba(60,70,110,0.22),0 0 4px rgba(60,70,110,0.10);"></div>
<div class="abs" style="left:1659.500px;top:565.500px;width:298.500px;height:32px;background:#5571db;"></div>
<div class="t dd" style="top:529.200px;">7</div>
<div class="t dd" style="top:561.400px;color:#9fb1f5;">8</div>
<div class="t dd" style="top:593.600px;">9</div>
<div class="t dd" style="top:626.600px;">10</div>
<div class="t dd" style="top:658.800px;">11</div>

</div>
</body>
</html>
